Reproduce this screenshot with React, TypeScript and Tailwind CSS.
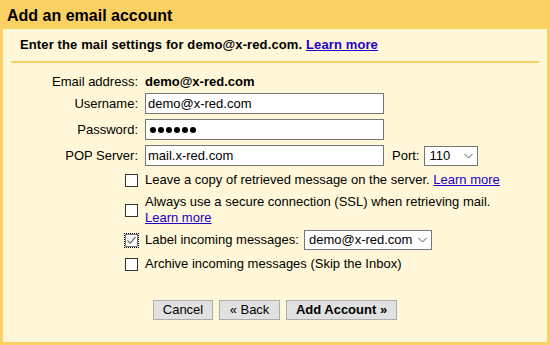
import React from 'react'

const font = { fontFamily: '"Liberation Sans", Arial, sans-serif' }

function Chevron() {
  return (
    <svg width="9" height="5" viewBox="0 0 9 5" className="absolute right-[4px] top-1/2 -translate-y-1/2">
      <path d="M0.5 0.5 L4.5 4.5 L8.5 0.5" fill="none" stroke="#555" strokeWidth="1" />
    </svg>
  )
}

function Box({ checked = false }: { checked?: boolean }) {
  return (
    <span
      className={`relative block w-[13px] h-[13px] bg-white border ${
        checked ? 'border-[#7a7a7a] outline outline-1 outline-dotted outline-black outline-offset-[0px]' : 'border-[#333]'
      }`}
    >
      {checked && (
        <svg width="11" height="11" viewBox="0 0 11 11" className="absolute left-0 top-0">
          <path d="M1.5 5.5 L4.2 8.2 L9.5 2" fill="none" stroke="#777" strokeWidth="1.4" />
        </svg>
      )}
    </span>
  )
}

function Row({ label, children }: { label: React.ReactNode; children: React.ReactNode }) {
  return (
    <div className="flex items-center gap-[7px]">
      <div className="w-[135px] flex justify-end text-right shrink-0">{label}</div>
      <div className="flex items-center">{children}</div>
    </div>
  )
}

const inputCls =
  'w-[239px] h-[21px] border border-[#767676] bg-white px-[2px] text-[13px] text-black outline-none'

export default function App() {
  return (
    <div style={font} className="w-[550px] h-[345px] bg-[#fad163] flex flex-col text-[13px] text-black">
      <div className="h-[29px] pt-[7px] px-[7px] text-[16px] leading-[18px] font-bold">Add an email account</div>

      <div className="flex-1 mx-[3px] mb-[3px] bg-[#fff7d7] pt-[8px]">
        <div className="mx-[8px] pl-[9px] pb-[9px] border-b-2 border-[#fad163] leading-[15px] font-bold tracking-[0.12px]">
          Enter the mail settings for demo@x-red.com.{' '}
          <a href="#" className="text-[#2200cc] underline">Learn more</a>
        </div>

        <div className="pt-[11px] leading-[15px]">
          <Row label="Email address:">
            <span className="font-bold">demo@x-red.com</span>
          </Row>
          <div className="mt-[4px] flex flex-col gap-[5px]">
            <Row label="Username:">
              <input className={inputCls} defaultValue="demo@x-red.com" />
            </Row>
            <Row label="Password:">
              <div className="w-[239px] h-[21px] border border-[#767676] bg-white pl-[4px] flex items-center gap-[2px]">
                {[0, 1, 2, 3, 4, 5].map(i => (
                  <span key={i} className="w-[6px] h-[6px] rounded-full bg-black" />
                ))}
              </div>
            </Row>
            <Row label="POP Server:">
              <input className={inputCls} defaultValue="mail.x-red.com" />
              <span className="ml-[8px]">Port:</span>
              <div className="relative ml-[5px] w-[54px] h-[20px] border border-[#767676] bg-white flex items-center pl-[4px]">
                110
                <Chevron />
              </div>
            </Row>
          </div>
        </div>

        <div className="leading-[16px]">
          <div className="mt-[6px]">
            <Row label={<Box />}>
              <span>
                Leave a copy of retrieved message on the server.{' '}
                <a href="#" className="text-[#2200cc] underline">Learn more</a>
              </span>
            </Row>
          </div>
          <div className="mt-[6px]">
            <Row label={<Box />}>
              <span>
                Always use a secure connection (SSL) when retrieving mail.
                <br />
                <a href="#" className="text-[#2200cc] underline">Learn more</a>
              </span>
            </Row>
          </div>
          <div className="mt-[4px]">
            <Row label={<Box checked />}>
              <span>Label incoming messages:</span>
              <div className="relative ml-[5px] w-[128px] h-[20px] border border-[#767676] bg-white flex items-center pl-[4px]">
                demo@x-red.com
                <Chevron />
              </div>
            </Row>
          </div>
          <div className="mt-[6px]">
            <Row label={<Box />}>
              <span>Archive incoming messages (Skip the Inbox)</span>
            </Row>
          </div>
        </div>

        <div className="mt-[28px] flex justify-center gap-[6px]">
          <button className="w-[60px] h-[20px] bg-[#e1e1e1] border border-[#adadad] leading-[18px]">Cancel</button>
          <button className="w-[61px] h-[20px] bg-[#e1e1e1] border border-[#adadad] leading-[18px]">« Back</button>
          <button className="w-[111px] h-[20px] bg-[#e1e1e1] border border-[#adadad] leading-[18px] font-bold">
            Add Account »
          </button>
        </div>
      </div>
    </div>
  )
}
